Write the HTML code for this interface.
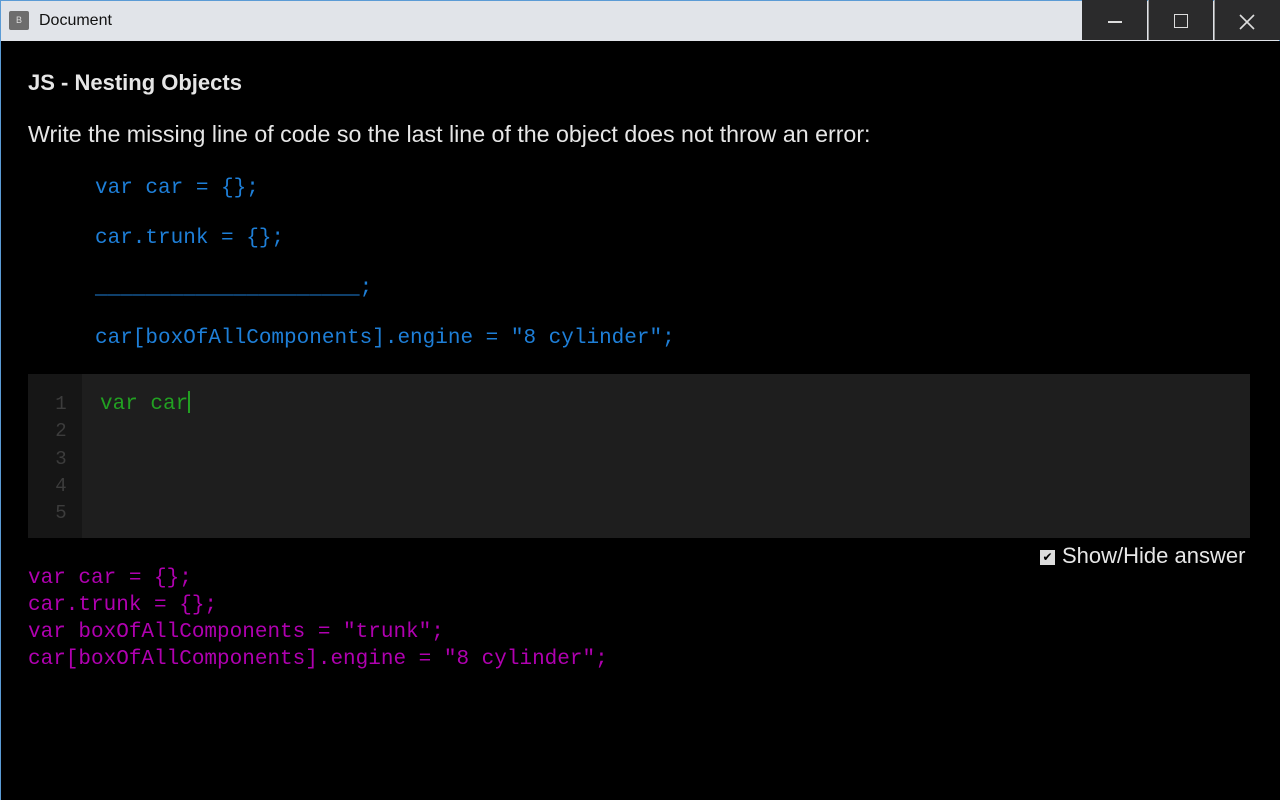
<!DOCTYPE html>
<html><head><style>
*{margin:0;padding:0;box-sizing:border-box}
body{width:1280px;height:800px;background:#000;overflow:hidden;position:relative;font-family:"Liberation Sans",sans-serif}
.tb{position:absolute;left:0;top:0;width:1280px;height:41px;background:#e1e4e9;border-top:1px solid #5b9bd5;border-left:1px solid #5b9bd5;border-right:1px solid #5b9bd5}
.ic{position:absolute;left:8px;top:10px;width:20px;height:19px;background:#6d6d6d;border-radius:2px;color:#ddd;font-size:9px;text-align:center;line-height:19px}
.tt{position:absolute;left:38px;top:11px;font-size:16px;color:#111}
.btn{position:absolute;top:0;height:40px;width:65px;background:#2b2b2c;}
.side{position:absolute;left:0;top:41px;width:1px;height:759px;background:#5b9bd5}
.mono{font-family:"Liberation Mono",monospace;font-size:21px}
</style></head><body>
<div class="tb"><div class="ic">B</div><div class="tt">Document</div></div>
<div class="btn" style="left:1082px"><div style="position:absolute;left:26px;top:21px;width:14px;height:1.5px;background:#ddd"></div></div>
<div class="btn" style="left:1148px;border-left:1px solid #999"><div style="position:absolute;left:25px;top:14px;width:14px;height:14px;border:1.5px solid #ddd"></div></div>
<div class="btn" style="left:1214px;width:66px;border-left:1px solid #999">
<svg width="66" height="40" style="position:absolute;left:0;top:0"><path d="M25 15L39 29M39 15L25 29" stroke="#ddd" stroke-width="1.6"/></svg></div>
<div class="side"></div>
<div style="position:absolute;left:28px;top:70px;font-size:22px;font-weight:bold;color:#e6e6e6">JS - Nesting Objects</div>
<div style="position:absolute;left:28px;top:121px;font-size:23.2px;color:#e6e6e6">Write the missing line of code so the last line of the object does not throw an error:</div>
<div class="mono" style="position:absolute;left:95px;top:176px;color:#1e7fd8;line-height:25px">
<div>var car = {};</div>
<div style="margin-top:25px">car.trunk = {};</div>
<div style="margin-top:25px">_____________________;</div>
<div style="margin-top:25px">car[boxOfAllComponents].engine = "8 cylinder";</div>
</div>
<div style="position:absolute;left:28px;top:374px;width:1222px;height:164px;background:#1e1e1e">
<div class="mono" style="position:absolute;left:0;top:0;width:54px;height:164px;background:#161616;padding-top:17px;text-align:center;color:#3c3c3c;font-size:19px;line-height:27.3px;padding-left:12px">1<br>2<br>3<br>4<br>5</div>
<div class="mono" style="position:absolute;left:72px;top:17px;color:#22a022;line-height:27px">var car<span style="display:inline-block;width:1.5px;height:22px;background:#22a022;vertical-align:-4px"></span></div>
</div>
<div style="position:absolute;left:1040px;top:543px;font-size:22px;color:#e6e6e6"><span style="display:inline-block;width:15px;height:15px;background:#ddd;vertical-align:2px;margin-right:7px;color:#000;font-size:12px;line-height:15px;text-align:center">✔</span>Show/Hide answer</div>
<div class="mono" style="position:absolute;left:28px;top:565px;color:#b000b0;line-height:27px">
<div>var car = {};</div><div>car.trunk = {};</div><div>var boxOfAllComponents = "trunk";</div><div>car[boxOfAllComponents].engine = "8 cylinder";</div>
</div>
</body></html>
